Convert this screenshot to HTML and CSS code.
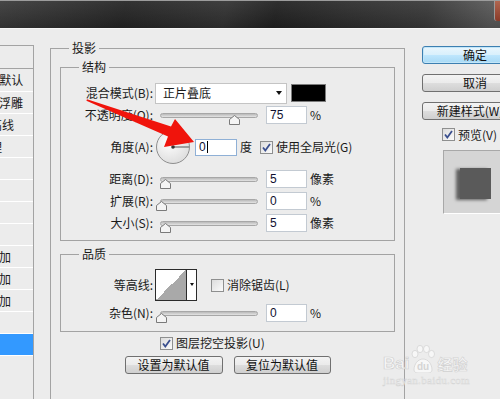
FILE: index.html
```html
<!DOCTYPE html>
<html lang="zh-CN">
<head>
<meta charset="utf-8">
<title>图层样式</title>
<link rel="stylesheet" href="styles.css">
</head>
<body>
<div class="titlebar"><span class="close"></span></div>
<div class="main">
  <div class="layers">
    <ul class="layer-list">
      <li class="head">样式</li>
      <li class="lv0 first">混合选项:默认</li>
      <li class="lv1">斜面和浮雕</li>
      <li class="lv2">等高线</li>
      <li class="lv2">纹理</li>
      <li class="lv1">描边</li>
      <li class="lv1">内阴影</li>
      <li class="lv1">内发光</li>
      <li class="lv1">光泽</li>
      <li class="lv1">颜色叠加</li>
      <li class="lv1">渐变叠加</li>
      <li class="lv1">图案叠加</li>
      <li class="lv1">外发光</li>
      <li class="lv1 selected">投影</li>
    </ul>
  </div>

  <fieldset class="group outer">
    <legend class="outer-legend">投影</legend>

    <fieldset class="group struct">
      <legend>结构</legend>
      <div class="row">
        <span class="lbl">混合模式(B):</span>
        <div class="select"><span class="select-text">正片叠底</span><span class="arrow"></span></div>
        <span class="swatch"></span>
      </div>
      <div class="row">
        <span class="lbl">不透明度(O):</span>
        <div class="slider"><svg class="thumb" style="left:68px" width="11" height="10" viewBox="0 0 11 10"><polygon points="0.5,9.5 0.5,4.5 5.5,0.5 10.5,4.5 10.5,9.5" fill="#f4f4f4" stroke="#7a7a7a"/></svg></div>
        <span class="num">75</span>
        <span class="unit">%</span>
      </div>
      <div class="row angle">
        <span class="lbl">角度(A):</span>
        <svg class="dial" width="34" height="34" viewBox="0 0 34 34">
          <defs><radialGradient id="dg" cx="0.4" cy="0.35" r="0.7"><stop offset="0" stop-color="#ffffff"/><stop offset="1" stop-color="#dcdcdc"/></radialGradient></defs>
          <circle cx="17" cy="17" r="16.5" fill="url(#dg)" stroke="#8e8e8e"/>
          <line x1="17" y1="17" x2="33" y2="17" stroke="#555" stroke-width="1"/>
          <circle cx="17" cy="17" r="1.8" fill="#333"/>
        </svg>
        <span class="num focus">0<span class="caret"></span></span>
        <span class="unit">度</span>
        <span class="cb checked"><svg width="11" height="11" viewBox="0 0 11 11"><path d="M2 5.5l2.3 3L9 2" fill="none" stroke="#3a4f8e" stroke-width="1.8"/></svg></span>
        <span class="cb-text">使用全局光(G)</span>
      </div>
      <div class="row">
        <span class="lbl">距离(D):</span>
        <div class="slider"><svg class="thumb" style="left:-1px" width="11" height="10" viewBox="0 0 11 10"><polygon points="0.5,9.5 0.5,4.5 5.5,0.5 10.5,4.5 10.5,9.5" fill="#f4f4f4" stroke="#7a7a7a"/></svg></div>
        <span class="num">5</span>
        <span class="unit">像素</span>
      </div>
      <div class="row">
        <span class="lbl">扩展(R):</span>
        <div class="slider"><svg class="thumb" style="left:-5px" width="11" height="10" viewBox="0 0 11 10"><polygon points="0.5,9.5 0.5,4.5 5.5,0.5 10.5,4.5 10.5,9.5" fill="#f4f4f4" stroke="#7a7a7a"/></svg></div>
        <span class="num">0</span>
        <span class="unit">%</span>
      </div>
      <div class="row">
        <span class="lbl">大小(S):</span>
        <div class="slider"><svg class="thumb" style="left:-1px" width="11" height="10" viewBox="0 0 11 10"><polygon points="0.5,9.5 0.5,4.5 5.5,0.5 10.5,4.5 10.5,9.5" fill="#f4f4f4" stroke="#7a7a7a"/></svg></div>
        <span class="num">5</span>
        <span class="unit">像素</span>
      </div>
    </fieldset>

    <fieldset class="group quality">
      <legend>品质</legend>
      <div class="row contour-row">
        <span class="lbl">等高线:</span>
        <div class="contour"><span class="curve"></span><span class="drop"><span class="arrow small"></span></span></div>
        <span class="cb aa"></span>
        <span class="cb-text">消除锯齿(L)</span>
      </div>
      <div class="row">
        <span class="lbl">杂色(N):</span>
        <div class="slider"><svg class="thumb" style="left:-5px" width="11" height="10" viewBox="0 0 11 10"><polygon points="0.5,9.5 0.5,4.5 5.5,0.5 10.5,4.5 10.5,9.5" fill="#f4f4f4" stroke="#7a7a7a"/></svg></div>
        <span class="num">0</span>
        <span class="unit">%</span>
      </div>
    </fieldset>

    <div class="knockout">
      <span class="cb checked"><svg width="11" height="11" viewBox="0 0 11 11"><path d="M2 5.5l2.3 3L9 2" fill="none" stroke="#3a4f8e" stroke-width="1.8"/></svg></span>
      <span class="cb-text">图层挖空投影(U)</span>
    </div>
    <div class="defaults">
      <button class="btn wide">设置为默认值</button>
      <button class="btn wide2">复位为默认值</button>
    </div>
  </fieldset>

  <div class="side">
    <button class="btn side-btn primary">确定</button>
    <button class="btn side-btn">取消</button>
    <button class="btn side-btn">新建样式(W)...</button>
    <div class="preview-check">
      <span class="cb checked"><svg width="11" height="11" viewBox="0 0 11 11"><path d="M2 5.5l2.3 3L9 2" fill="none" stroke="#3a4f8e" stroke-width="1.8"/></svg></span>
      <span class="cb-text">预览(V)</span>
    </div>
    <div class="preview"><span class="square"></span></div>
  </div>
</div>

<svg class="red-arrow" width="500" height="399" viewBox="0 0 500 399">
  <polygon points="87,99.2 171,126.5 175,119 194,142 164,147 168,136.5 86.4,100.8" fill="#f0140c"/>
</svg>

<div class="watermark">
  <div class="wm-logo">
    <span class="wm-bai">Bai</span>
    <svg class="wm-paw" width="26" height="28" viewBox="0 0 26 28">
      <g fill="#f7f7f7" stroke="#d4d4d4" stroke-width="0.8">
        <ellipse cx="5" cy="9" rx="3" ry="3.6"/>
        <ellipse cx="10" cy="4" rx="3" ry="3.6"/>
        <ellipse cx="16.5" cy="4" rx="3" ry="3.6"/>
        <ellipse cx="21.5" cy="9" rx="3" ry="3.6"/>
        <path d="M4 25c0-6 4-11 9-11s9 5 9 11c0 2-2 3-4 3H8c-2 0-4-1-4-3z"/>
      </g>
      <text x="13" y="25" text-anchor="middle" class="wm-du">du</text>
    </svg>
    <span class="wm-jy">经验</span>
  </div>
  <div class="wm-url">jingyan.baidu.com</div>
</div>
</body>
</html>
```

FILE: styles.css
```css
* { box-sizing: border-box; margin: 0; padding: 0; }

html, body { width: 500px; height: 399px; overflow: hidden; }

body {
  position: relative;
  background: #ececec;
  font: 12px/14px "Noto Sans CJK SC", "Noto Sans", sans-serif;
  color: #1a1a1a;
}

/* ---------- title bar ---------- */
.titlebar {
  height: 29px;
  border-top: 1px solid #9c9c9c;
  border-bottom: 1px solid #f6f6f6;
  background:
    linear-gradient(180deg, rgba(255,255,255,0.06), rgba(0,0,0,0.15)),
    linear-gradient(100deg, #3b3b3b 0%, #262626 25%, #333 45%, #222 55%, #2f2f2f 70%, #3a3a3a 85%, #5a5a5a 98%);
  display: flex;
  justify-content: flex-end;
}
.close {
  width: 6px;
  height: 20px;
  border-left: 1px solid #9a9a9a;
  border-bottom-left-radius: 3px;
  background: linear-gradient(#b06650, #8a3a28);
}

/* ---------- main layout ---------- */
.main {
  display: flex;
  align-items: flex-start;
  height: 370px;
}

/* layer list (left, clipped) */
.layers {
  flex: 0 0 34px;
  width: 34px;
  height: 400px;
  margin-top: 16px;
  border-top: 1px solid #a3a3a3;
  border-right: 1px solid #a3a3a3;
  overflow: hidden;
}
.layer-list {
  list-style: none;
  width: 94px;
  margin-left: -60px;
}
.layer-list li {
  height: 22px;
  line-height: 21px;
  border-bottom: 1px solid #ffffff;
  white-space: nowrap;
}
.layer-list .head { height: 23px; line-height: 22px; border-bottom-color: #a3a3a3; }
.layer-list .first { height: 23px; line-height: 22px; }
.lv0 { padding-left: 8px; }
.lv1 { padding-left: 23px; }
.lv2 { padding-left: 38px; }
.layer-list .selected { background: #3399ff; color: #fff; }

/* ---------- group boxes ---------- */
.group {
  border: 1px solid #a3a3a3;
  min-width: 0;
}
.group legend {
  margin-left: 18px;
  padding: 0 3px;
  line-height: 14px;
  font-size: 12px;
}
.outer {
  flex: 0 0 355px;
  width: 355px;
  height: 420px;
  margin-top: 12px;
  margin-left: 16px;
  padding: 0 9px;
}
.outer .outer-legend { margin-left: 9px; }

.struct {
  margin-top: 5px;
  padding: 8px 0 6px;
}
.quality {
  margin-top: 6px;
  padding: 7px 0 7px;
}

.row {
  display: flex;
  align-items: center;
  height: 22px;
}
.row.angle { height: 42px; }
.row.contour-row { height: 34px; }

.lbl {
  flex: 0 0 92px;
  width: 92px;
  text-align: right;
  white-space: nowrap;
}

/* select */
.select {
  margin-left: 2px;
  width: 132px;
  height: 21px;
  border: 1px solid #c4c4c4;
  background: #fff;
  display: flex;
  align-items: center;
  justify-content: space-between;
  padding: 0 4px 0 7px;
}
.arrow {
  width: 0;
  height: 0;
  border-left: 3.5px solid transparent;
  border-right: 3.5px solid transparent;
  border-top: 4px solid #111;
}
.swatch {
  margin-left: 4px;
  width: 35px;
  height: 18px;
  background: #000;
  border: 1px solid #7c7c7c;
}

/* slider */
.slider {
  position: relative;
  margin-left: 7px;
  width: 98px;
  height: 5px;
  border: 1px solid #a7a7a7;
  border-radius: 3px;
  background: linear-gradient(#b9b9b9, #e4e4e4);
}
.thumb {
  position: absolute;
  top: 1px;
  display: block;
}

/* numeric fields */
.num {
  margin-left: 8px;
  width: 41px;
  height: 18px;
  border: 1px solid #c3cad2;
  background: #fff;
  padding-left: 3px;
  font: 12px/16px "Liberation Sans", Arial, sans-serif;
  color: #101030;
}
.num.focus {
  margin-left: 5px;
  width: 42px;
  height: 17px;
  line-height: 15px;
  border-color: #8fb0d6;
  display: flex;
  align-items: center;
}
.caret {
  display: inline-block;
  width: 1px;
  height: 12px;
  margin-left: 1px;
  background: #000;
}
.unit {
  margin-left: 3px;
  white-space: nowrap;
}

.dial { margin-left: 3px; display: block; }

/* checkbox */
.cb {
  width: 13px;
  height: 13px;
  border: 1px solid #8e8f8f;
  background: linear-gradient(135deg, #dcdcdc, #fbfbfb);
  display: inline-flex;
  align-items: center;
  justify-content: center;
  flex: 0 0 13px;
}
.cb svg { display: block; }
.row .cb { margin-left: 8px; }
.row .cb.aa { margin-left: 14px; }
.cb-text { margin-left: 3px; white-space: nowrap; }

/* contour picker */
.contour {
  margin-left: 2px;
  width: 42px;
  height: 32px;
  border: 1px solid #2b2b2b;
  display: flex;
  background: #fff;
}
.curve {
  flex: 0 0 31px;
  background: linear-gradient(to top left, #a9a9a9 50%, #ffffff 50%);
  border-right: 1px solid #2b2b2b;
}
.drop {
  flex: 1;
  display: flex;
  align-items: center;
  justify-content: center;
  padding-bottom: 2px;
}
.arrow.small {
  border-left-width: 2.5px;
  border-right-width: 2.5px;
  border-top-width: 3px;
}

/* knockout & default buttons */
.knockout {
  margin-top: 2px;
  height: 18px;
  padding-left: 100px;
  display: flex;
  align-items: center;
}
.defaults {
  margin-top: 4px;
  display: flex;
  justify-content: center;
  gap: 11px;
}

.btn {
  height: 18px;
  border: 1px solid #707070;
  border-radius: 3px;
  background: linear-gradient(#f3f3f3 0%, #ebebeb 48%, #dddddd 52%, #cfcfcf 100%);
  font: 12px/16px "Noto Sans CJK SC", "Noto Sans", sans-serif;
  color: #111;
  white-space: nowrap;
  overflow: hidden;
}
.btn.wide { width: 98px; }
.btn.wide2 { width: 97px; }

/* right side */
.side {
  flex: 0 0 130px;
  padding-top: 17px;
  padding-left: 17px;
  display: flex;
  flex-direction: column;
  align-items: flex-start;
}
.side-btn {
  width: 106px;
  margin-bottom: 10px;
  text-align: center;
}
.side-btn.primary {
  border-color: #3c7fb1;
  background: linear-gradient(#eaf6fd 0%, #d9f0fc 48%, #bee6fd 52%, #a7d9f5 100%);
  box-shadow: inset 0 0 0 1px #c3e6f8;
}
.preview-check {
  margin-top: -2px;
  margin-left: 20px;
  display: flex;
  align-items: center;
  height: 13px;
}
.preview {
  margin-top: 9px;
  margin-left: 21px;
  width: 64px;
  height: 64px;
  background: #d5d5d5;
  border-top: 1px solid #a8a8a8;
  border-left: 1px solid #a8a8a8;
  border-bottom: 1px solid #ffffff;
  padding: 17px 0 0 16px;
}
.square {
  display: block;
  width: 31px;
  height: 31px;
  background: #5a5a5a;
  box-shadow: -4px 1px 3px rgba(0,0,0,0.55);
}

/* overlays */
.red-arrow {
  position: absolute;
  left: 0;
  top: 0;
  pointer-events: none;
}

.watermark {
  position: absolute;
  left: 383px;
  top: 344px;
  color: #f7f7f7;
  pointer-events: none;
}
.wm-logo {
  display: flex;
  align-items: flex-end;
  height: 29px;
}
.wm-bai {
  font: bold 17px/18px "Liberation Sans", Arial, sans-serif;
  -webkit-text-stroke: 0.7px #d0d0d0;
  margin-right: 1px;
}
.wm-paw { display: block; }
.wm-du {
  font: bold 10px "Liberation Sans", Arial, sans-serif;
  fill: #d4d4d4;
}
.wm-jy {
  font: bold 15px/18px "Noto Sans CJK SC", sans-serif;
  -webkit-text-stroke: 0.6px #d0d0d0;
  margin-left: 1px;
}
.wm-url {
  font: 11px/14px "Liberation Serif", serif;
  -webkit-text-stroke: 0.5px #d6d6d6;
  letter-spacing: 0.3px;
}
```
